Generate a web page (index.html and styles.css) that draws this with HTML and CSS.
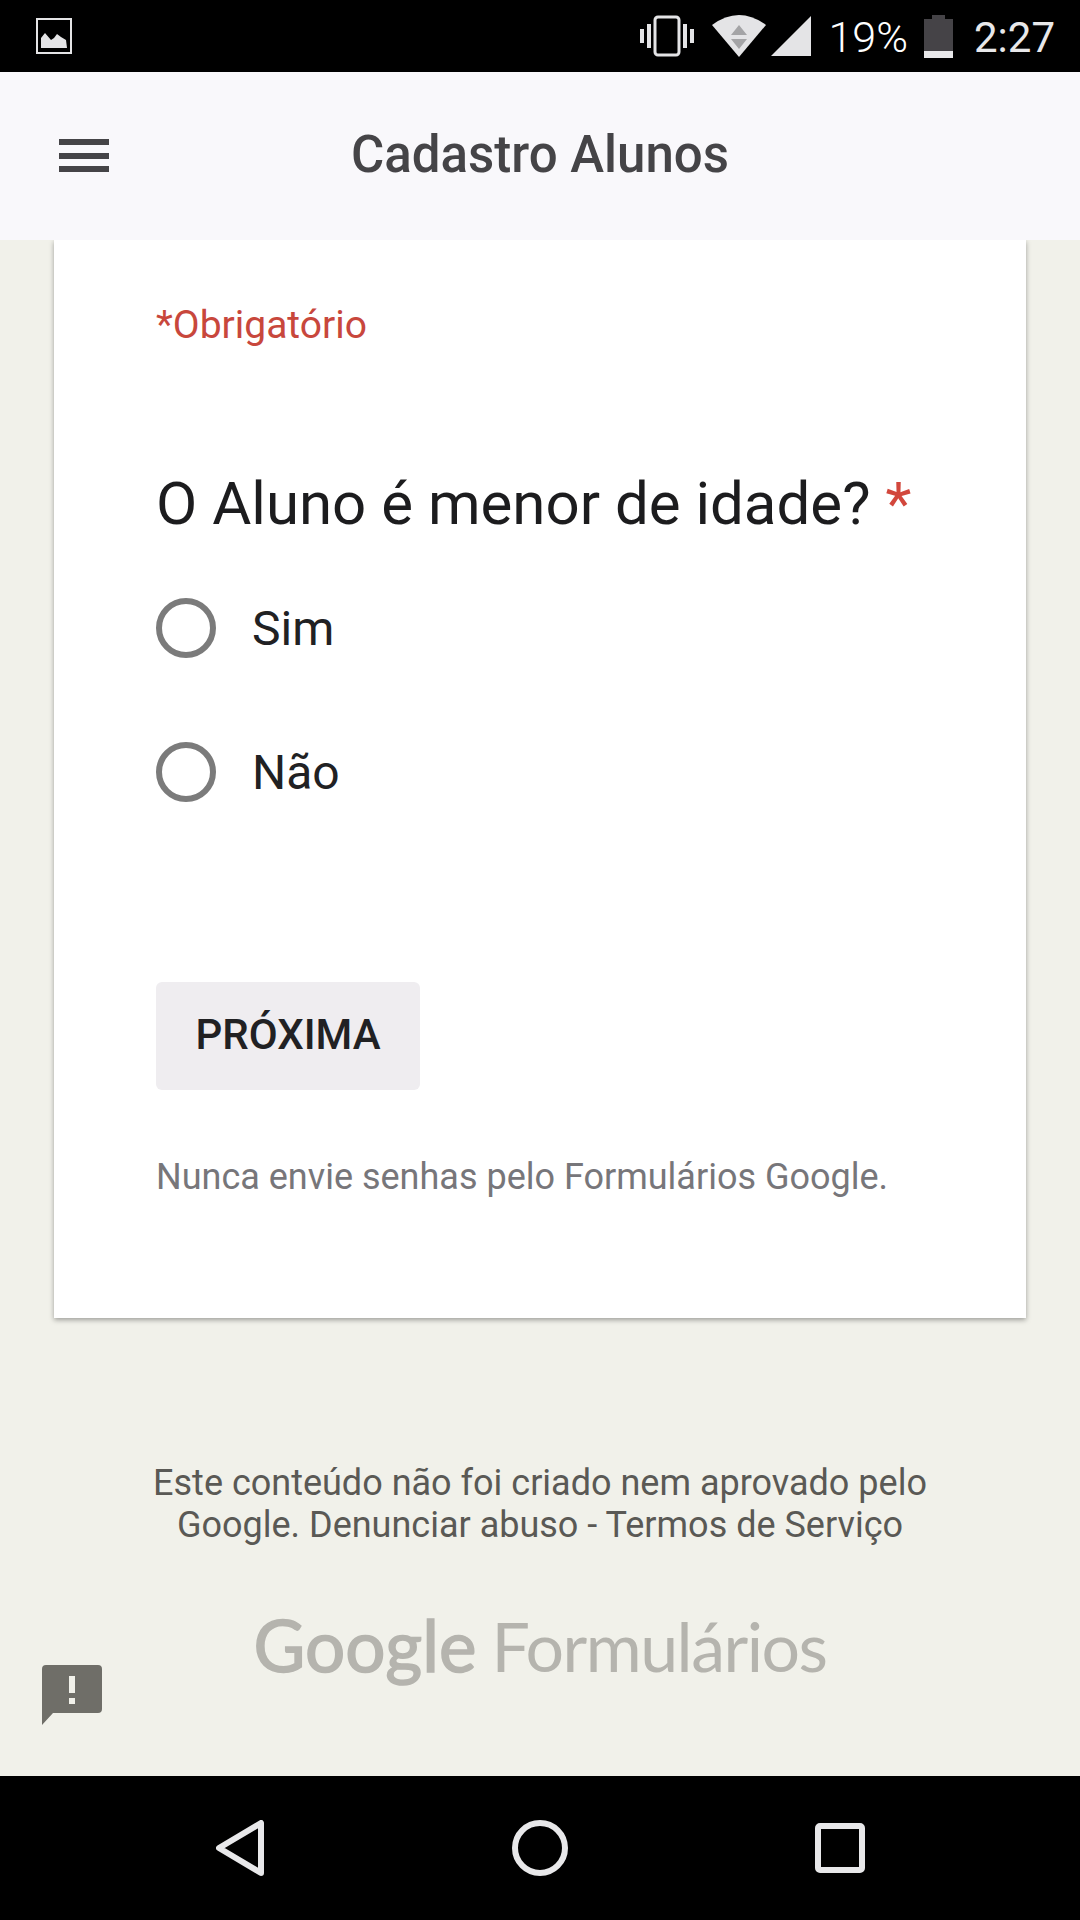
FILE: index.html
```html
<!DOCTYPE html>
<html>
<head>
    <title>Cadastro Alunos</title>
    <link rel="stylesheet" href="styles.css">
</head>
<body>
    <div class="phone">
        <div class="status-bar">
            <svg class="status-picture" width="36" height="36" viewBox="0 0 36 36">
                <path d="M1 1h34v34H1z" fill="none" stroke="#e4e4e6" stroke-width="2"/>
                <path d="M5 30V20l4-5 6 7 3-2 3-4 4 3 5 3 1 8z" fill="#e4e4e6"/>
            </svg>
            <div class="status-right">
                <svg class="icon-vibrate" width="54" height="42" viewBox="0 0 54 42">
                    <rect x="15" y="2" width="24" height="38" rx="3" fill="none" stroke="#e4e4e6" stroke-width="3"/>
                    <path d="M0 14h4v14H0zM7 9h4v24H7zM43 9h4v24h-4zM50 14h4v14h-4z" fill="#e4e4e6"/>
                </svg>
                <svg class="icon-wifi" width="54" height="42" viewBox="0 0 54 42">
                    <path d="M0 10Q27-10 54 10L27 42z" fill="#e4e4e6"/>
                    <path d="M27 10l8 10H19zM19 24h16l-8 10z" fill="#a4a4a6"/>
                </svg>
                <svg class="icon-signal" width="40" height="40" viewBox="0 0 40 40">
                    <path d="M40 0v40H0z" fill="#e4e4e6"/>
                </svg>
                <span class="battery-text">19%</span>
                <div class="battery">
                    <div class="battery-cap"></div>
                    <div class="battery-body"><div class="battery-level"></div></div>
                </div>
                <span class="clock">2:27</span>
            </div>
        </div>

        <div class="app-bar">
            <div class="menu-icon"><span></span><span></span><span></span></div>
            <h1>Cadastro Alunos</h1>
        </div>

        <div class="content">
            <div class="card">
                <div class="required-note">*Obrigatório</div>
                <div class="question">O Aluno é menor de idade? <span class="star">*</span></div>
                <div class="option"><span class="radio"></span><span>Sim</span></div>
                <div class="option"><span class="radio"></span><span>Não</span></div>
                <button class="next-button">PRÓXIMA</button>
                <p class="password-note">Nunca envie senhas pelo Formulários Google.</p>
            </div>

            <p class="disclaimer">Este conteúdo não foi criado nem aprovado pelo<br>Google. Denunciar abuso - Termos de Serviço</p>
            <div class="forms-logo"><span class="logo-google">Google</span><span class="logo-forms">Formulários</span></div>

            <svg class="feedback-icon" width="60" height="60" viewBox="0 0 60 60">
                <path d="M0 4Q0 0 4 0H56Q60 0 60 4V44Q60 48 56 48H11L0 60z" fill="#6f6e68"/>
                <path d="M27 11h6v17h-6zM27 33h6v6h-6z" fill="#f1f1ea"/>
            </svg>
        </div>

        <div class="nav-bar">
            <svg width="48" height="56" viewBox="0 0 48 56">
                <path d="M45 3V53L3 28z" fill="none" stroke="#e8e8ea" stroke-width="6" stroke-linejoin="round"/>
            </svg>
            <svg width="56" height="56" viewBox="0 0 56 56">
                <circle cx="28" cy="28" r="25" fill="none" stroke="#e8e8ea" stroke-width="6"/>
            </svg>
            <svg width="50" height="50" viewBox="0 0 50 50">
                <rect x="3" y="3" width="44" height="44" rx="2" fill="none" stroke="#e8e8ea" stroke-width="6"/>
            </svg>
        </div>
    </div>
</body>
</html>
```

FILE: styles.css
```css
body {
    margin: 0;
    padding: 0;
    font-family: 'Roboto', 'Liberation Sans', sans-serif;
    background-color: #000;
}

.phone {
    width: 1080px;
    height: 1920px;
    display: flex;
    flex-direction: column;
    overflow: hidden;
}

/* status bar */
.status-bar {
    height: 72px;
    flex-shrink: 0;
    background-color: #000;
    color: #e8e8ea;
    display: flex;
    align-items: center;
    justify-content: space-between;
    padding: 0 25px 0 36px;
}

.status-right {
    display: flex;
    align-items: center;
}

.icon-vibrate {
    margin-right: 18px;
}

.icon-wifi {
    margin-right: 5px;
}

.icon-signal {
    margin-right: 18px;
}

.battery-text {
    font-size: 43px;
    font-weight: 300;
    color: #fff;
    margin-top: 2px;
    margin-right: 16px;
}

.battery {
    width: 29px;
    height: 43px;
    margin-right: 21px;
    display: flex;
    flex-direction: column;
    align-items: center;
}

.battery-cap {
    width: 13px;
    height: 4px;
    background-color: #454347;
}

.battery-body {
    flex: 1;
    width: 100%;
    background-color: #454347;
    display: flex;
    align-items: flex-end;
}

.battery-level {
    width: 100%;
    height: 7px;
    background-color: #e8e8ea;
}

.clock {
    font-size: 42px;
    margin-top: 2px;
}

/* app bar */
.app-bar {
    height: 168px;
    flex-shrink: 0;
    background-color: #f9f8fb;
    position: relative;
    display: flex;
    align-items: center;
    justify-content: center;
    padding-bottom: 3px;
    box-sizing: border-box;
    z-index: 2;
}

.app-bar h1 {
    margin: 0;
    font-size: 51px;
    font-weight: 500;
    color: #454447;
}

.menu-icon {
    position: absolute;
    left: 59px;
    top: 67px;
    width: 50px;
    height: 33px;
    display: flex;
    flex-direction: column;
    justify-content: space-between;
}

.menu-icon span {
    height: 6px;
    background-color: #454447;
}

/* form */
.content {
    flex: 1;
    background-color: #f1f1ea;
    position: relative;
}

.card {
    margin: 0 54px;
    height: 1078px;
    box-sizing: border-box;
    padding: 62px 102px 0;
    background-color: #fff;
    box-shadow: 0 2px 5px rgba(0, 0, 0, 0.35);
}

.required-note {
    font-size: 39px;
    color: #c8473c;
}

.question {
    margin-top: 120px;
    margin-bottom: 17px;
    font-size: 60px;
    color: #1c1c1e;
    white-space: nowrap;
}

.star {
    color: #d2473c;
}

.option {
    height: 144px;
    display: flex;
    align-items: center;
    font-size: 48px;
    color: #212123;
}

.radio {
    width: 60px;
    height: 60px;
    box-sizing: border-box;
    border: 6px solid #7b7b7b;
    border-radius: 50%;
    margin-right: 36px;
}

.next-button {
    display: block;
    width: 264px;
    height: 108px;
    margin-top: 138px;
    padding: 0 0 4px;
    border: none;
    border-radius: 6px;
    background-color: #efedf0;
    color: #212123;
    font-family: inherit;
    font-size: 42px;
    font-weight: 500;
}

.password-note {
    margin: 66px 0 0;
    font-size: 36px;
    color: #77767a;
    white-space: nowrap;
}

.disclaimer {
    margin: 144px 0 0;
    text-align: center;
    font-size: 36px;
    line-height: 42px;
    color: #5a5955;
}

.forms-logo {
    margin-top: 59px;
    display: flex;
    justify-content: center;
    align-items: baseline;
    gap: 15px;
    font-family: 'Lato', sans-serif;
    line-height: 80px;
    color: #b5b4ae;
    white-space: nowrap;
}

.logo-google {
    font-size: 71px;
    font-weight: 400;
    -webkit-text-stroke: 1.5px #b5b4ae;
}

.logo-forms {
    font-size: 68px;
    letter-spacing: -1.5px;
}

.feedback-icon {
    position: absolute;
    left: 42px;
    top: 1425px;
}

/* nav bar */
.nav-bar {
    height: 144px;
    flex-shrink: 0;
    background-color: #000;
    position: relative;
}

.nav-bar svg {
    position: absolute;
    top: 44px;
}

.nav-bar svg:nth-child(1) {
    left: 216px;
}

.nav-bar svg:nth-child(2) {
    left: 512px;
}

.nav-bar svg:nth-child(3) {
    left: 815px;
    top: 47px;
}
```
